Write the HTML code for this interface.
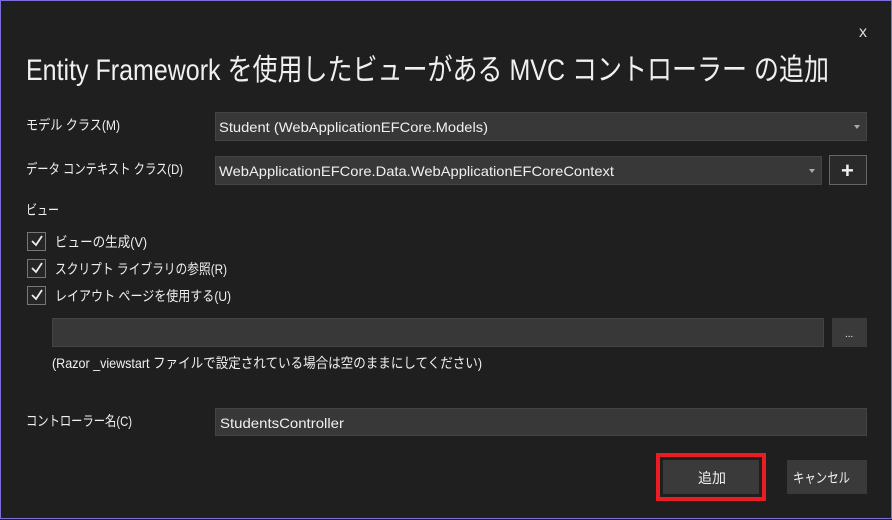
<!DOCTYPE html>
<html><head><meta charset="utf-8"><style>
*{margin:0;padding:0;box-sizing:border-box}
body{width:892px;height:519px;background:#1f1f1f;font-family:"Liberation Sans","Noto Sans CJK JP",sans-serif;color:#f0f0f0;position:relative;overflow:hidden;border:1px solid #7a6fd8}
.in{position:absolute;background:#383838;border:1px solid #444}
.arr{position:absolute;right:6px;top:12px;width:0;height:0;border-left:3px solid transparent;border-right:3px solid transparent;border-top:4px solid #aaa}
.cb{position:absolute;left:26px;width:19px;height:19px;border:1px solid #777;background:#262626}
.btn{position:absolute;background:#3a3a3a}
svg{position:absolute;left:0;top:0}
text{fill:#f0f0f0;font-family:"Liberation Sans","Noto Sans CJK JP",sans-serif;font-size:14px}
</style></head><body>
<div class="in" style="left:214px;top:111px;width:652px;height:29px"><div class="arr"></div></div>
<div class="in" style="left:214px;top:155px;width:607px;height:29px"><div class="arr"></div></div>
<div class="btn" style="left:828px;top:154px;width:38px;height:30px;border:1px solid #666;background:#2a2a2a"></div>
<div class="cb" style="top:231px"></div>
<div class="cb" style="top:258px"></div>
<div class="cb" style="top:285px"></div>
<div class="in" style="left:51px;top:317px;width:772px;height:29px"></div>
<div class="btn" style="left:831px;top:317px;width:35px;height:29px"></div>
<div class="in" style="left:214px;top:407px;width:652px;height:28px"></div>
<div style="position:absolute;left:655px;top:452px;width:110px;height:48px;border:4px solid #ec1c24"></div>
<div class="btn" style="left:662px;top:459px;width:96px;height:34px"></div>
<div class="btn" style="left:786px;top:459px;width:80px;height:34px"></div>
<svg width="892" height="519">
<text x="858" y="36" style="font-size:16px;fill:#ddd">x</text>
<text x="25" y="79" style="font-size:30px" textLength="803" lengthAdjust="spacingAndGlyphs">Entity Framework を使用したビューがある MVC コントローラー の追加</text>
<text x="25" y="129" textLength="94" lengthAdjust="spacingAndGlyphs">モデル クラス(M)</text>
<text x="218" y="131" textLength="269" lengthAdjust="spacingAndGlyphs">Student (WebApplicationEFCore.Models)</text>
<text x="25" y="173" textLength="157" lengthAdjust="spacingAndGlyphs">データ コンテキスト クラス(D)</text>
<text x="218" y="175" textLength="395" lengthAdjust="spacingAndGlyphs">WebApplicationEFCore.Data.WebApplicationEFCoreContext</text>
<text x="840" y="177" style="font-size:22px;font-weight:bold">+</text>
<text x="25" y="214" textLength="33" lengthAdjust="spacingAndGlyphs">ビュー</text>
<path d="M31 240 l4 4 l6 -9" stroke="#eee" stroke-width="1.8" fill="none"/>
<path d="M31 267 l4 4 l6 -9" stroke="#eee" stroke-width="1.8" fill="none"/>
<path d="M31 294 l4 4 l6 -9" stroke="#eee" stroke-width="1.8" fill="none"/>
<text x="54" y="246" textLength="92" lengthAdjust="spacingAndGlyphs">ビューの生成(V)</text>
<text x="54" y="273" textLength="172" lengthAdjust="spacingAndGlyphs">スクリプト ライブラリの参照(R)</text>
<text x="54" y="300" textLength="176" lengthAdjust="spacingAndGlyphs">レイアウト ページを使用する(U)</text>
<text x="844" y="336" style="font-size:10px">...</text>
<text x="51" y="367" textLength="430" lengthAdjust="spacingAndGlyphs">(Razor _viewstart ファイルで設定されている場合は空のままにしてください)</text>
<text x="25" y="425" textLength="106" lengthAdjust="spacingAndGlyphs">コントローラー名(C)</text>
<text x="219" y="427" textLength="124" lengthAdjust="spacingAndGlyphs">StudentsController</text>
<text x="697" y="482" textLength="28" lengthAdjust="spacingAndGlyphs">追加</text>
<text x="792" y="482" textLength="57" lengthAdjust="spacingAndGlyphs">キャンセル</text>
</svg>
</body></html>
